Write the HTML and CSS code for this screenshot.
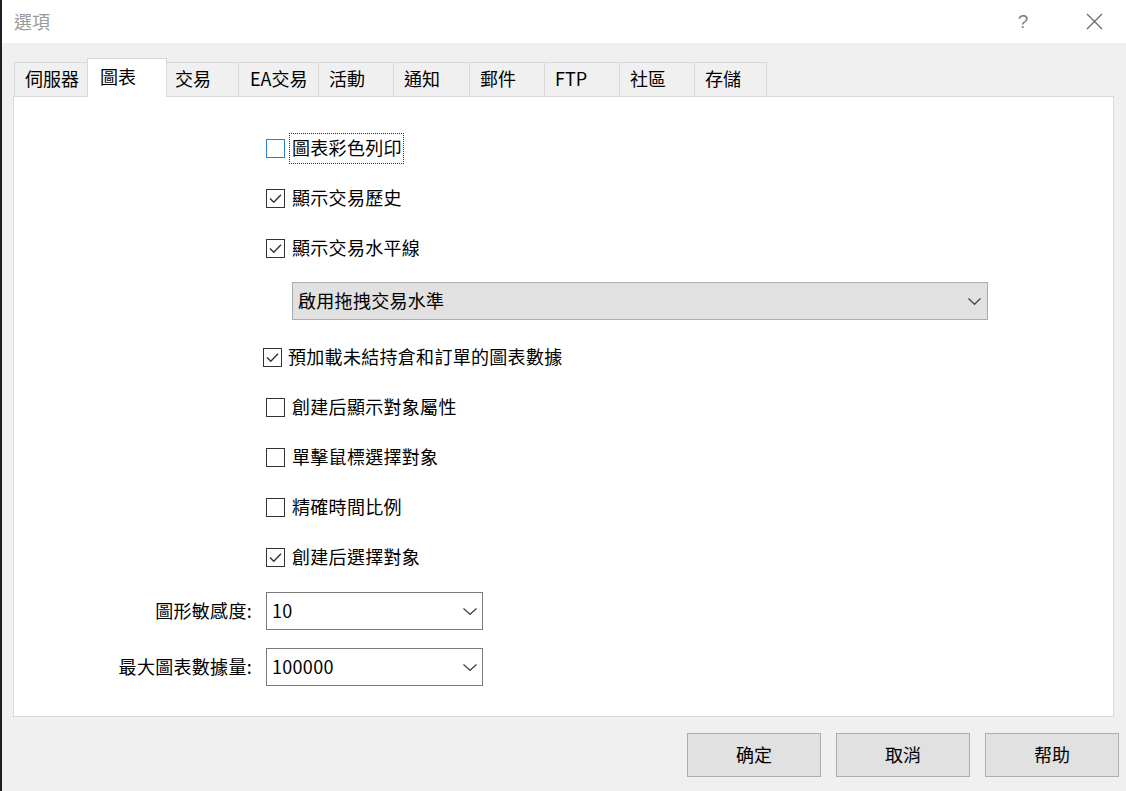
FILE: index.html
```html
<!DOCTYPE html>
<html lang="zh-Hant">
<head>
<meta charset="utf-8">
<title>選項</title>
<link rel="stylesheet" href="styles.css">
</head>
<body>
<div class="window">
  <div class="titlebar">
    <span class="title">選項</span>
    <span class="help">?</span>
    <span class="close"><svg width="17" height="17" viewBox="0 0 17 17"><path d="M1 1L16 16M16 1L1 16" stroke="#6a6a6a" stroke-width="1.3" fill="none"/></svg></span>
  </div>
  <div class="tabs">
    <div class="tab t-server">伺服器</div>
    <div class="tab t-chart active">圖表</div>
    <div class="tab t-trade">交易</div>
    <div class="tab t-ea">EA交易</div>
    <div class="tab t-std">活動</div>
    <div class="tab t-notif">通知</div>
    <div class="tab t-std">郵件</div>
    <div class="tab t-std">FTP</div>
    <div class="tab t-std">社區</div>
    <div class="tab t-store">存儲</div>
  </div>
  <div class="panel">
    <div class="content">
      <div class="row">
        <span class="cb focused"></span><span class="lbl focus">圖表彩色列印</span>
      </div>
      <div class="row">
        <span class="cb"><svg width="17" height="17" viewBox="0 0 17 17"><path d="M3 8.5L6.8 12.3L14 4.8" stroke="#333" stroke-width="1.4" fill="none"/></svg></span><span class="lbl">顯示交易歷史</span>
      </div>
      <div class="row">
        <span class="cb"><svg width="17" height="17" viewBox="0 0 17 17"><path d="M3 8.5L6.8 12.3L14 4.8" stroke="#333" stroke-width="1.4" fill="none"/></svg></span><span class="lbl">顯示交易水平線</span>
      </div>
      <div class="dropdown">
        <span class="dd-text">啟用拖拽交易水準</span>
        <svg class="chev" width="13" height="7" viewBox="0 0 13 7"><path d="M0.5 0.5L6.5 6.3L12.5 0.5" stroke="#444" stroke-width="1.3" fill="none"/></svg>
      </div>
      <div class="row after-dd">
        <span class="cb shifted"><svg width="17" height="17" viewBox="0 0 17 17"><path d="M3 8.5L6.8 12.3L14 4.8" stroke="#333" stroke-width="1.4" fill="none"/></svg></span><span class="lbl">預加載未結持倉和訂單的圖表數據</span>
      </div>
      <div class="row">
        <span class="cb"></span><span class="lbl">創建后顯示對象屬性</span>
      </div>
      <div class="row">
        <span class="cb"></span><span class="lbl">單擊鼠標選擇對象</span>
      </div>
      <div class="row">
        <span class="cb"></span><span class="lbl">精確時間比例</span>
      </div>
      <div class="row">
        <span class="cb"><svg width="17" height="17" viewBox="0 0 17 17"><path d="M3 8.5L6.8 12.3L14 4.8" stroke="#333" stroke-width="1.4" fill="none"/></svg></span><span class="lbl">創建后選擇對象</span>
      </div>
      <div class="combo-row first">
        <span class="combo-label">圖形敏感度:</span>
        <div class="combo">
          <span class="combo-text">10</span>
          <svg class="chev" width="14" height="7" viewBox="0 0 14 7"><path d="M0.5 0.5L7 6.3L13.5 0.5" stroke="#444" stroke-width="1.3" fill="none"/></svg>
        </div>
      </div>
      <div class="combo-row second">
        <span class="combo-label">最大圖表數據量:</span>
        <div class="combo">
          <span class="combo-text">100000</span>
          <svg class="chev" width="14" height="7" viewBox="0 0 14 7"><path d="M0.5 0.5L7 6.3L13.5 0.5" stroke="#444" stroke-width="1.3" fill="none"/></svg>
        </div>
      </div>
    </div>
  </div>
  <div class="buttons">
    <div class="btn">确定</div>
    <div class="btn">取消</div>
    <div class="btn">帮助</div>
  </div>
</div>
</body>
</html>
```

FILE: styles.css
```css
html, body {
  margin: 0;
  padding: 0;
}

body {
  font-family: "Noto Sans CJK TC", "Noto Sans", sans-serif;
  font-size: 18px;
  color: #000;
  background: #f0f0f0;
}

.window {
  width: 1126px;
  height: 791px;
  box-sizing: border-box;
  border-left: 2px solid #1f1f1f;
  background: #f0f0f0;
  display: flex;
  flex-direction: column;
  overflow: hidden;
}

.titlebar {
  height: 43px;
  flex: none;
  background: #fff;
  display: flex;
  align-items: center;
  padding: 0 20px 0 12px;
}

.title {
  color: #9b9b9b;
  font-size: 18px;
  line-height: 24px;
  padding-bottom: 2px;
}

.help {
  margin-left: auto;
  width: 20px;
  text-align: center;
  color: #808080;
  font-family: "Liberation Sans", sans-serif;
  font-size: 19px;
  line-height: 20px;
}

.close {
  margin-left: 49px;
  width: 24px;
  height: 17px;
  display: flex;
  justify-content: center;
}

.tabs {
  height: 53px;
  flex: none;
  display: flex;
  align-items: flex-end;
  padding-left: 12px;
  position: relative;
  z-index: 1;
}

.tab {
  box-sizing: border-box;
  height: 34px;
  border-top: 1px solid #d9d9d9;
  border-right: 1px solid #d9d9d9;
  padding-left: 10px;
  line-height: 30px;
  background: #f0f0f0;
  white-space: nowrap;
}

.tab:first-child {
  border-left: 1px solid #d9d9d9;
}

.tab.active {
  height: 39px;
  background: #fff;
  border-left: 1px solid #d9d9d9;
  margin-left: -1px;
  margin-bottom: -1px;
  line-height: 35px;
  padding-left: 12px;
}

.t-server { width: 74px; }
.t-chart { width: 80px; }
.t-trade { width: 72px; padding-left: 8px; }
.t-ea { width: 80px; padding-left: 11px; }
.t-std { width: 75px; }
.t-notif { width: 76px; }
.t-store { width: 72px; }

.panel {
  flex: none;
  margin-left: 11px;
  width: 1101px;
  height: 621px;
  box-sizing: border-box;
  border: 1px solid #d9d9d9;
  background: #fff;
}

.content {
  padding-top: 26px;
}

.row {
  height: 50px;
  display: flex;
  align-items: center;
  padding-left: 252px;
}

.row.after-dd {
  margin-top: 12px;
}

.cb {
  width: 19px;
  height: 19px;
  box-sizing: border-box;
  border: 1px solid #333;
  background: #fff;
  margin-right: 7px;
  flex: none;
  display: flex;
  align-items: center;
  justify-content: center;
}

.cb.focused {
  border-color: #2a7fd4;
  margin-right: 4px;
}

.cb.shifted {
  margin-left: -3px;
  margin-right: 6px;
}

.lbl {
  line-height: 27px;
  padding-bottom: 2px;
  white-space: nowrap;
  letter-spacing: 0.3px;
}

.lbl.focus {
  border: 1px dotted #333;
  padding: 0 1px 2px 2px;
}

.dropdown {
  margin: 9px 0 0 278px;
  width: 696px;
  height: 38px;
  box-sizing: border-box;
  border: 1px solid #adadad;
  background: #e1e1e1;
  display: flex;
  align-items: center;
  padding: 0 6px 0 5px;
}

.dd-text,
.combo-text {
  flex: 1;
  line-height: 24px;
  padding-bottom: 2px;
  letter-spacing: 0.3px;
}

.chev {
  flex: none;
}

.combo-row {
  display: grid;
  grid-template-columns: 238px 217px;
  column-gap: 14px;
  align-items: center;
}

.combo-row.first {
  margin-top: 10px;
}

.combo-row.second {
  margin-top: 18px;
}

.combo-label {
  text-align: right;
  white-space: nowrap;
  padding-bottom: 2px;
  letter-spacing: 0.3px;
}

.combo {
  height: 38px;
  box-sizing: border-box;
  border: 1px solid #7a7a7a;
  background: #fff;
  display: flex;
  align-items: center;
  padding: 0 5px 0 5px;
}

.buttons {
  flex: none;
  display: flex;
  justify-content: flex-end;
  gap: 15px;
  padding-right: 7px;
  margin-top: 16px;
}

.btn {
  width: 134px;
  height: 44px;
  box-sizing: border-box;
  border: 1px solid #adadad;
  background: #e1e1e1;
  display: flex;
  align-items: center;
  justify-content: center;
  padding-bottom: 2px;
}
```
